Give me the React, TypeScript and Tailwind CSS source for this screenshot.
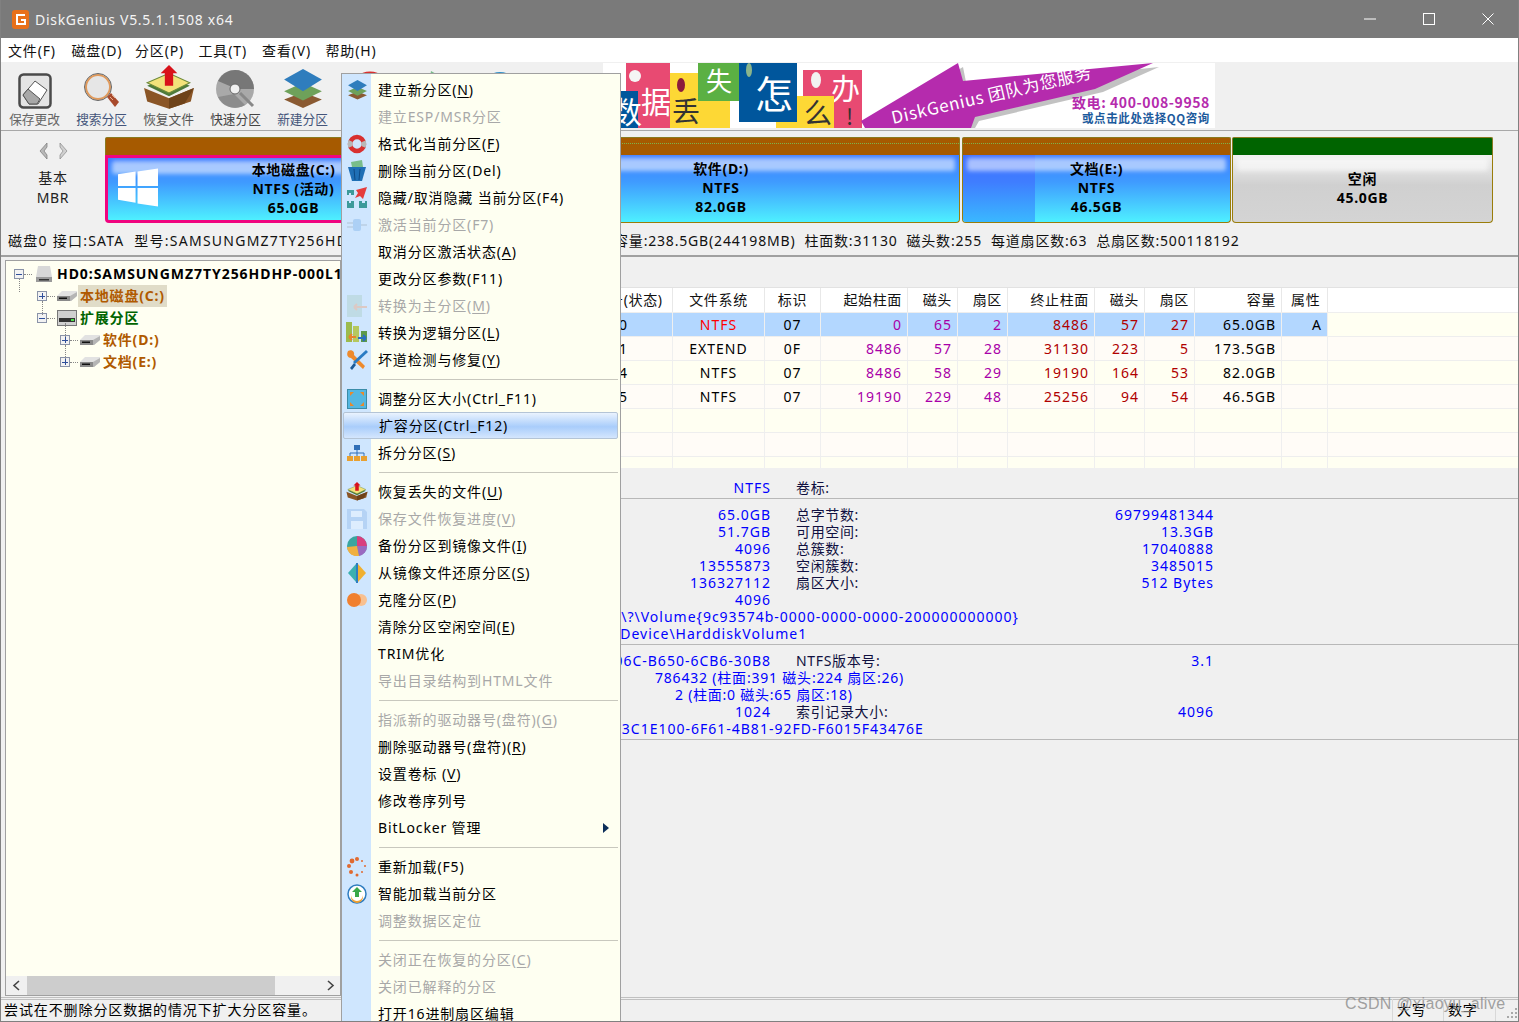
import type { ReactNode } from 'react';

const font = "[font-family:'Noto_Sans','Noto_Sans_CJK_SC',sans-serif]";

function Layers({ size }: { size: number }) {
  return (
    <svg width={size} height={size} viewBox="0 0 40 40">
      <path d="M20 24 38 31 20 39 2 31Z" fill="#8a5a32" />
      <path d="M20 15 38 23 20 32 2 23Z" fill="#6ea15a" />
      <path d="M20 2 38 12 20 23 2 12Z" fill="#2f7dbd" />
    </svg>
  );
}

function SaveIcon() {
  return (
    <svg width="34" height="36" viewBox="0 0 34 36">
      <rect x="1.5" y="1.5" width="31" height="33" rx="4" fill="#e4e4e4" stroke="#4a4a4a" strokeWidth="2.5" />
      <path d="M5 22 17 8 29 17 20 31H11Z" fill="#fff" stroke="#555" />
      <path d="M5 22 10 16 22 26 19 31H11Z" fill="#a8a8a8" stroke="#555" />
    </svg>
  );
}

function SearchIcon() {
  return (
    <svg width="36" height="36" viewBox="0 0 36 36">
      <circle cx="14" cy="14" r="12" fill="#e6e6e6" stroke="#e09a5c" strokeWidth="2" />
      <circle cx="14" cy="14" r="13.5" fill="none" stroke="#666" />
      <path d="M23 24 27 20 35 29 31 34Z" fill="#a84a2c" />
      <path d="M26 24 29 27M28 22 31 25" stroke="#e8b090" />
    </svg>
  );
}

function RecoverIcon({ size = 52 }: { size?: number }) {
  return (
    <svg width={size} height={(size * 42) / 50} viewBox="0 0 50 42">
      <path d="M1 22 25 32 49 22 46 35 25 42 4 35Z" fill="#8a5526" />
      <path d="M25 32 49 22 40 37 25 42Z" fill="#6e4219" />
      <path d="M4 20 25 11 45 20 25 30Z" fill="#4d7a3a" />
      <path d="M4 17 25 8 45 17 25 27Z" fill="#f3e27a" stroke="#6c8a3a" />
      <path d="M21 20V8H17L25 0 33 8H29V20Z" fill="#d8121a" />
    </svg>
  );
}

function DiscIcon() {
  return (
    <svg width="42" height="40" viewBox="0 0 42 40">
      <circle cx="20" cy="20" r="19" fill="#a9a9a9" />
      <path d="M20 1A19 19 0 0 1 39 20H24L17 18 3 12A19 19 0 0 1 20 1Z" fill="#777" />
      <path d="M3 28 19 25 30 36A19 19 0 0 1 3 28Z" fill="#8c8c8c" />
      <circle cx="20" cy="20" r="5" fill="#f0f0f0" stroke="#666" />
      <path d="M25 24 38 37" stroke="#888" strokeWidth="3" />
    </svg>
  );
}

function TreeDisk({ kind }: { kind: 'root' | 'part' | 'ext' }) {
  if (kind === 'root') {
    return (
      <svg width="18" height="18" viewBox="0 0 18 18">
        <path d="M3 1H15L17 12H1Z" fill="#d8d8d8" />
        <rect x="1" y="12" width="16" height="5" fill="#9a9a9a" />
        <rect x="4" y="14" width="10" height="1.5" fill="#333" />
      </svg>
    );
  }
  if (kind === 'ext') {
    return (
      <svg width="20" height="16" viewBox="0 0 20 16">
        <rect x="0.5" y="0.5" width="19" height="15" fill="#d0d0d0" stroke="#777" />
        <rect x="2" y="8" width="16" height="4" fill="#333" />
        <rect x="14" y="9" width="3" height="2" fill="#4be04b" />
      </svg>
    );
  }
  return (
    <svg width="20" height="11" viewBox="0 0 20 11">
      <path d="M5 0H20V5L14 10H0V5Z" fill="#e2e2e2" />
      <path d="M0 5H13V10H0Z" fill="#8a8a8a" />
      <path d="M13 5 20 1V5L14 10H13Z" fill="#b5b5b5" />
      <rect x="2" y="6.5" width="8" height="1.5" fill="#111" />
    </svg>
  );
}

function MenuIcon({ name, dim }: { name: string; dim?: boolean }) {
  const cls = dim ? 'opacity-40' : '';
  switch (name) {
    case 'layers':
      return <Layers size={21} />;
    case 'format':
      return (
        <svg width="20" height="20" viewBox="0 0 20 20">
          <circle cx="10" cy="10" r="7" fill="none" stroke="#d83030" strokeWidth="4.5" />
          <circle cx="10" cy="10" r="7" fill="none" stroke="#b8b8b8" strokeWidth="4.5" strokeDasharray="6 16" strokeDashoffset="-19" />
        </svg>
      );
    case 'trash':
      return (
        <svg width="18" height="22" viewBox="0 0 18 22">
          <path d="M3 2 14 0 15 7H4Z" fill="#79bd8a" />
          <path d="M0 7H18L14 21H4Z" fill="#1f6fb5" />
          <path d="M6 9 7 20M12 9 11 20" stroke="#0d4a85" />
        </svg>
      );
    case 'hide':
      return (
        <svg width="22" height="22" viewBox="0 0 22 22">
          <path d="M1 3H8V8H5V6H3V8H1ZM1 14H3V16H5V14H8V21H1ZM13 14H16V16H19V14H21V21H13Z" fill="#3d9a9a" />
          <path d="M21 0 17 12 14 9 9 11 12 6 10 3Z" fill="#e53b3b" />
        </svg>
      );
    case 'plug':
      return (
        <svg width="20" height="14" viewBox="0 0 20 14" className={cls}>
          <rect x="6" y="1" width="8" height="12" rx="2" fill="#7ab0e8" />
          <path d="M0 5H6M0 9H6M14 7H20" stroke="#9ab" strokeWidth="1.5" />
        </svg>
      );
    case 'primary':
      return (
        <svg width="20" height="22" viewBox="0 0 20 22" className={cls}>
          <rect x="0" y="0" width="15" height="22" fill="#a9ccc0" />
          <path d="M7 12H20M7 12 10 9M7 12 10 15" stroke="#f0a070" strokeWidth="2" fill="none" />
        </svg>
      );
    case 'logical':
      return (
        <svg width="22" height="22" viewBox="0 0 22 22">
          <rect x="0" y="0" width="6" height="20" fill="#9cbb4e" />
          <rect x="7" y="4" width="6" height="16" fill="#b5c85e" />
          <rect x="15" y="9" width="6" height="11" fill="#5d9a4a" />
          <path d="M3 15H10M3 15 6 12M3 15 6 18" stroke="#e8842a" strokeWidth="2" fill="none" />
          <path d="M12 16H20M20 16 17 13M20 16 17 19" stroke="#2a6fc0" strokeWidth="2" fill="none" />
        </svg>
      );
    case 'tools':
      return (
        <svg width="22" height="22" viewBox="0 0 22 22">
          <path d="M2 2C6 0 9 3 8 6L19 17 17 20 5 9C2 9 0 6 2 2Z" fill="#ee8a2c" />
          <path d="M20 1 22 3 9 15 7 13Z" fill="#2a7cc4" />
          <path d="M8 14 4 19 6 21 10 16Z" fill="#1b5a96" />
        </svg>
      );
    case 'resize':
      return (
        <svg width="20" height="20" viewBox="0 0 20 20">
          <rect x="0.5" y="0.5" width="19" height="19" fill="#54b7e2" stroke="#3a8ca8" />
          <path d="M3 3 7 3 3 7ZM17 3 17 7 13 3ZM3 17 3 13 7 17ZM17 17 13 17 17 13Z" fill="#e88a2c" />
        </svg>
      );
    case 'split':
      return (
        <svg width="20" height="16" viewBox="0 0 20 16">
          <rect x="7" y="0" width="6" height="5" fill="#2f6fb8" />
          <path d="M10 5V8M3 11V8H17V11M10 8V11" stroke="#2f6fb8" fill="none" />
          <rect x="0" y="11" width="6" height="5" fill="#e8a030" />
          <rect x="7" y="11" width="6" height="5" fill="#e8a030" />
          <rect x="14" y="11" width="6" height="5" fill="#e8a030" />
        </svg>
      );
    case 'recover':
      return <RecoverIcon size={22} />;
    case 'floppy':
      return (
        <svg width="20" height="20" viewBox="0 0 20 20" className={cls}>
          <path d="M0 0H17L20 3V20H0Z" fill="#90b8e8" />
          <rect x="4" y="2" width="11" height="6" fill="#f4f8ff" />
          <rect x="4" y="12" width="12" height="8" fill="#f4f8ff" />
        </svg>
      );
    case 'pie':
      return (
        <svg width="20" height="20" viewBox="0 0 20 20">
          <circle cx="10" cy="10" r="10" fill="#3aa5a0" />
          <path d="M10 10 10 0A10 10 0 0 1 20 10Z" fill="#d83f7e" />
          <path d="M10 10H20A10 10 0 0 1 12 20Z" fill="#9a6ac0" />
          <path d="M10 10 12 20A10 10 0 0 1 0 11Z" fill="#f0b040" />
        </svg>
      );
    case 'mirror':
      return (
        <svg width="18" height="20" viewBox="0 0 18 20">
          <path d="M8 1V19L0 10Z" fill="#3ab0b0" />
          <path d="M10 1V19L18 10Z" fill="#f0b030" />
          <rect x="8" y="0" width="2" height="20" fill="#2f7dc0" />
        </svg>
      );
    case 'clone':
      return (
        <svg width="20" height="14" viewBox="0 0 20 14">
          <circle cx="14" cy="7" r="6" fill="#f8c090" />
          <circle cx="7" cy="7" r="7" fill="#f08030" />
        </svg>
      );
    case 'reload':
      return (
        <svg width="20" height="20" viewBox="0 0 20 20">
          {[
            [10, 2, 2],
            [15, 4, 1],
            [18, 9, 1],
            [15, 15, 1],
            [10, 18, 1.5],
            [4, 15, 2],
            [2, 9, 2],
            [5, 4, 2.4],
          ].map(([x, y, r]) => (
            <circle key={`${x}-${y}`} cx={x} cy={y} r={r} fill="#e06a30" />
          ))}
        </svg>
      );
    case 'load':
      return (
        <svg width="20" height="20" viewBox="0 0 20 20">
          <circle cx="10" cy="10" r="9" fill="#fff" stroke="#2f7dc0" strokeWidth="1.5" />
          <path d="M4 11A6 6 0 0 0 16 11V13A6 6 0 0 1 4 13Z" fill="#f0a030" />
          <path d="M10 3 15 8H12V13H8V8H5Z" fill="#3aa84a" />
        </svg>
      );
    default:
      return null;
  }
}

function Label({ text }: { text: string }) {
  const i = text.indexOf('&');
  if (i < 0) return <>{text}</>;
  return (
    <>
      {text.slice(0, i)}
      <span className="underline underline-offset-2">{text[i + 1]}</span>
      {text.slice(i + 2)}
    </>
  );
}

type Entry = { t?: string; icon?: string; off?: boolean; on?: boolean; sub?: boolean };

const menu: Entry[] = [
  { t: '建立新分区(&N)', icon: 'layers' },
  { t: '建立ESP/MSR分区', off: true },
  { t: '格式化当前分区(&F)', icon: 'format' },
  { t: '删除当前分区(Del)', icon: 'trash' },
  { t: '隐藏/取消隐藏 当前分区(F4)', icon: 'hide' },
  { t: '激活当前分区(F7)', icon: 'plug', off: true },
  { t: '取消分区激活状态(&A)' },
  { t: '更改分区参数(F11)' },
  { t: '转换为主分区(&M)', icon: 'primary', off: true },
  { t: '转换为逻辑分区(&L)', icon: 'logical' },
  { t: '坏道检测与修复(&Y)', icon: 'tools' },
  {},
  { t: '调整分区大小(Ctrl_F11)', icon: 'resize' },
  { t: '扩容分区(Ctrl_F12)', on: true },
  { t: '拆分分区(&S)', icon: 'split' },
  {},
  { t: '恢复丢失的文件(&U)', icon: 'recover' },
  { t: '保存文件恢复进度(&V)', icon: 'floppy', off: true },
  { t: '备份分区到镜像文件(&I)', icon: 'pie' },
  { t: '从镜像文件还原分区(&S)', icon: 'mirror' },
  { t: '克隆分区(&P)', icon: 'clone' },
  { t: '清除分区空闲空间(&E)' },
  { t: 'TRIM优化' },
  { t: '导出目录结构到HTML文件', off: true },
  {},
  { t: '指派新的驱动器号(盘符)(&G)', off: true },
  { t: '删除驱动器号(盘符)(&R)' },
  { t: '设置卷标 (&V)' },
  { t: '修改卷序列号' },
  { t: 'BitLocker 管理', sub: true },
  {},
  { t: '重新加载(F5)', icon: 'reload' },
  { t: '智能加载当前分区', icon: 'load' },
  { t: '调整数据区定位', off: true },
  {},
  { t: '关闭正在恢复的分区(&C)', off: true },
  { t: '关闭已解释的分区', off: true },
  { t: '打开16进制扇区编辑' },
];

function ContextMenu() {
  return (
    <div className="absolute left-[340px] top-[73px] z-10 w-[280px] border border-[#a0a0a0] bg-[#fefff1] pt-[2px] pl-[1px] pb-[10px]">
      <div className="absolute left-0 top-0 bottom-0 w-[29px] bg-[#cfe6fe]" />
      {menu.map((m, i) =>
        m.t ? (
          <div
            key={i}
            className={`relative flex h-[27px] w-[275px] items-center text-[14px] ${
              m.off ? 'text-[#a8a8a8]' : 'text-black'
            } ${
              m.on
                ? 'rounded-[2px] border border-[#b4c4d6] bg-[linear-gradient(#eaf3fe,#a9cdfb_55%,#d4e6fd)]'
                : ''
            }`}
          >
            <span className="flex w-[35px] shrink-0 items-center justify-center pr-[7px]">
              {m.icon && <MenuIcon name={m.icon} dim={m.off} />}
            </span>
            <span className="whitespace-nowrap tracking-[0.85px]">
              <Label text={m.t} />
            </span>
            {m.sub && (
              <svg className="absolute right-[9px]" width="6" height="10" viewBox="0 0 6 10">
                <path d="M0 0 6 5 0 10Z" fill="#0d2f5a" />
              </svg>
            )}
          </div>
        ) : (
          <div key={i} className="relative flex h-[12px] items-center pl-[36px] pr-[2px]">
            <div className="h-px w-full bg-[#c8c8be]" />
          </div>
        ),
      )}
    </div>
  );
}

function Banner() {
  const face = "'Noto Sans CJK SC', sans-serif";
  return (
    <svg width="612" height="65" viewBox="0 0 612 65" className="shrink-0 bg-white">
      <rect x="23" y="0" width="44" height="65" fill="#e84a72" />
      <circle cx="32" cy="13" r="6" fill="#f5f5f5" />
      <rect x="0" y="28" width="35" height="37" fill="#00569c" />
      <text x="9" y="60" fontSize="30" fill="#fff" fontFamily={face}>数</text>
      <text x="38" y="50" fontSize="30" fill="#fff" fontFamily={face}>据</text>
      <rect x="67" y="10" width="60" height="55" fill="#fdd835" />
      <ellipse cx="78" cy="22" rx="4" ry="7" fill="#8c1c3c" />
      <text x="69" y="59" fontSize="28" fill="#333" fontFamily={face}>丢</text>
      <rect x="95" y="0" width="41" height="38" fill="#5bb043" />
      <text x="103" y="28" fontSize="26" fill="#fff" fontFamily={face}>失</text>
      <rect x="200" y="7" width="59" height="58" fill="#e84a72" />
      <ellipse cx="213" cy="17" rx="5" ry="8" fill="#f2f2f2" />
      <text x="228" y="37" fontSize="29" fill="#fff" fontFamily={face}>办</text>
      <rect x="173" y="33" width="58" height="32" fill="#fdd835" />
      <text x="201" y="61" fontSize="28" fill="#333" fontFamily={face}>么</text>
      <text x="243" y="62" fontSize="22" fill="#333" fontFamily={face}>!</text>
      <rect x="136" y="0" width="58" height="59" fill="#00569c" />
      <ellipse cx="146" cy="7" rx="3" ry="7" fill="#8bb58b" />
      <text x="152" y="45" fontSize="38" fill="#fff" fontFamily={face}>怎</text>
      <path d="M262 62 360 4 364 24 556 4 500 29 376 58 372 65H280Z" fill="#999" opacity="0.6" />
      <path d="M258 58 355 0 360 18 550 0 492 26 372 54 368 65 262 65Z" fill="#b52bad" />
      <text
        x="0"
        y="0"
        fontSize="17"
        fill="#fff"
        fontFamily={face}
        transform="translate(290 61) rotate(-13)"
      >
        DiskGenius 团队为您服务
      </text>
      <text x="469" y="45" fontSize="14" fontWeight="700" fill="#b52bad" fontFamily={face} textLength="138">
        致电: 400-008-9958
      </text>
      <text x="479" y="60" fontSize="12" fontWeight="700" fill="#1c5a9c" fontFamily={face} textLength="128" lengthAdjust="spacingAndGlyphs">
        或点击此处选择QQ咨询
      </text>
    </svg>
  );
}

function Gloss({ left = 4 }: { left?: number }) {
  return (
    <div
      className="absolute right-[4px] top-[3px] h-[13px] rounded-[3px] bg-white opacity-55 blur-[2px]"
      style={{ left }}
    />
  );
}

function Partition({
  w,
  band,
  lines,
  body,
  active,
  dots,
  used,
  children,
}: {
  w: string;
  band: string;
  lines: string[];
  body: string;
  active?: boolean;
  dots?: boolean;
  used?: string;
  children?: ReactNode;
}) {
  return (
    <div className={`flex h-[86px] shrink-0 flex-col ${w}`}>
      <div className={`relative h-[18px] shrink-0 rounded-t-[2px] border border-b-0 border-[#8a7a20] ${band}`}>
        {dots && <div className="absolute left-0 right-0 top-[5px] border-t border-dotted border-[#7cb44a]" />}
      </div>
      <div
        className={`relative flex flex-1 flex-col items-center justify-center overflow-hidden rounded-b-[4px] pb-[2px] ${body} ${
          active ? 'border-[3px] border-[#f0047f]' : 'border border-t-0 border-[#9a7d0a]'
        }`}
      >
        {used && <div className={`absolute bottom-0 left-0 top-0 ${used}`} />}
        <Gloss />
        {children}
        {lines.map((l) => (
          <div key={l} className="relative text-[14px] font-bold leading-[19px] text-black">
            {l}
          </div>
        ))}
      </div>
    </div>
  );
}

const blueBody = 'bg-[linear-gradient(#3f7dff,#3f9bff_40%,#4ef0ff)]';

function ExpandBox({ open }: { open?: boolean }) {
  return (
    <span className="relative flex h-[10px] w-[10px] shrink-0 items-center justify-center border border-[#8a93a8] bg-[#f2f2f2]">
      <span className="h-px w-[6px] bg-[#2f4f9a]" />
      {!open && <span className="absolute h-[6px] w-px bg-[#2f4f9a]" />}
    </span>
  );
}

function TreeRow({
  indent,
  open,
  kind,
  color,
  selected,
  children,
}: {
  indent: string;
  open?: boolean;
  kind: 'root' | 'part' | 'ext';
  color: string;
  selected?: boolean;
  children: ReactNode;
}) {
  return (
    <div className={`flex h-[22px] items-center ${indent}`}>
      <ExpandBox open={open} />
      <span className="mr-[1px] w-[8px] shrink-0 border-t border-dotted border-[#888]" />
      <span className="flex w-[22px] shrink-0 items-center justify-center">
        <TreeDisk kind={kind} />
      </span>
      <span
        className={`shrink-0 whitespace-nowrap px-[2px] text-[14px] font-bold leading-[22px] ${
          kind === 'root' ? 'tracking-[0.95px]' : 'tracking-[0.8px]'
        } ${color} ${selected ? 'bg-[#e0dcc8]' : ''}`}
      >
        {children}
      </span>
    </div>
  );
}

const head = ['卷标', '序号(状态)', '文件系统', '标识', '起始柱面', '磁头', '扇区', '终止柱面', '磁头', '扇区', '容量', '属性'];

const rows = [
  ['本地磁盘(C:)', '0', 'NTFS', '07', '0', '65', '2', '8486', '57', '27', '65.0GB', 'A'],
  ['扩展分区', '1', 'EXTEND', '0F', '8486', '57', '28', '31130', '223', '5', '173.5GB', ''],
  ['软件(D:)', '4', 'NTFS', '07', '8486', '58', '29', '19190', '164', '53', '82.0GB', ''],
  ['文档(E:)', '5', 'NTFS', '07', '19190', '229', '48', '25256', '94', '54', '46.5GB', ''],
  ['', '', '', '', '', '', '', '', '', '', '', ''],
  ['', '', '', '', '', '', '', '', '', '', '', ''],
];

const grid =
  'grid h-[24px] grid-cols-[240px_88px_92px_56px_87px_50px_50px_87px_50px_50px_87px_46px_1fr] text-[14px] leading-[23px]';

function cellClass(c: number, selected: boolean) {
  const align = c === 1 ? 'text-center pr-[10px]' : c <= 3 ? 'text-center' : 'text-right pr-[5px]';
  let color = 'text-black';
  if (c >= 4 && c <= 6) color = 'text-[#a800a8]';
  if (c >= 7 && c <= 9) color = 'text-[#b00000]';
  if (c === 2 && selected) color = 'text-[#ff0000]';
  return `${align} ${color}`;
}

function DetailRow({ v, label, r }: { v: string; label?: string; r?: string }) {
  return (
    <div className="flex h-[17px] w-[869px] text-[14px] leading-[17px] text-[#0000ff]">
      <div className="w-[426px] shrink-0 whitespace-nowrap text-right tracking-[1px]">{v}</div>
      <div className="ml-[25px] flex-1 whitespace-nowrap text-[#101040]">{label}</div>
      <div className="whitespace-nowrap tracking-[1px]">{r}</div>
    </div>
  );
}

function FreeRow({ pad, children }: { pad: string; children: ReactNode }) {
  return (
    <div className={`h-[17px] whitespace-nowrap text-[14px] leading-[17px] text-[#0000ff] ${pad}`}>
      {children}
    </div>
  );
}

const tools = [
  { label: '保存更改', icon: <SaveIcon />, color: 'text-[#666]' },
  { label: '搜索分区', icon: <SearchIcon />, color: 'text-[#44557a]' },
  { label: '恢复文件', icon: <RecoverIcon />, color: 'text-[#555]' },
  { label: '快速分区', icon: <DiscIcon />, color: 'text-[#444]' },
  { label: '新建分区', icon: <Layers size={42} />, color: 'text-[#44557a]' },
  {
    label: '格式化',
    icon: (
      <svg width="36" height="38" viewBox="0 0 36 38">
        <circle cx="18" cy="19" r="15" fill="none" stroke="#d83030" strokeWidth="7" />
      </svg>
    ),
    color: 'text-[#444]',
  },
  {
    label: '删除分区',
    icon: (
      <svg width="36" height="38" viewBox="0 0 36 38">
        <path d="M12 0 26 8 30 38H6Z" fill="#79bd8a" />
      </svg>
    ),
    color: 'text-[#444]',
  },
  {
    label: '备份分区',
    icon: (
      <svg width="36" height="38" viewBox="0 0 36 38">
        <circle cx="14" cy="19" r="18" fill="#2f8fc8" />
      </svg>
    ),
    color: 'text-[#444]',
  },
];

export default function App() {
  return (
    <div className={`relative flex h-[1022px] w-[1519px] flex-col overflow-hidden border-x border-b border-[#808080] bg-[#f0f0f0] tracking-[0.65px] ${font}`}>
      <div className="flex h-[38px] shrink-0 items-center bg-[#7a7a7a] text-[#f4f4f4]">
        <svg className="ml-[11px]" width="17" height="19" viewBox="0 0 17 19">
          <rect width="17" height="19" rx="3" fill="#e8701a" />
          <path d="M13 5H5V14H13V10H9" fill="none" stroke="#fff" strokeWidth="2" />
        </svg>
        <span className="ml-[6px] text-[14px] tracking-[0.7px]">DiskGenius V5.5.1.1508 x64</span>
        <div className="ml-auto flex items-center">
          <svg className="mr-[47px]" width="12" height="2" viewBox="0 0 12 2"><path d="M0 1H12" stroke="#fff" /></svg>
          <svg className="mr-[47px]" width="12" height="12" viewBox="0 0 12 12"><rect x="0.5" y="0.5" width="11" height="11" fill="none" stroke="#fff" /></svg>
          <svg className="mr-[24px]" width="12" height="12" viewBox="0 0 12 12"><path d="M0.5 0.5 11.5 11.5M11.5 0.5 0.5 11.5" stroke="#fff" /></svg>
        </div>
      </div>

      <div className="flex h-[24px] shrink-0 items-center bg-white pl-[7px] text-[14px] tracking-[0.85px] text-[#111]">
        {['文件(F)', '磁盘(D)', '分区(P)', '工具(T)', '查看(V)', '帮助(H)'].map((m) => (
          <span key={m} className="w-[63.5px] whitespace-nowrap">{m}</span>
        ))}
      </div>

      <div className="flex h-[69px] shrink-0 border-b border-[#a8a8a8] pt-[1px]">
        <div className="flex w-[602px] shrink-0">
          {tools.map((t) => (
            <div key={t.label} className="flex w-[67px] shrink-0 flex-col items-center">
              <div className="flex h-[46px] items-end justify-center">{t.icon}</div>
              <span className={`mt-[2px] whitespace-nowrap text-[12.7px] leading-[16px] tracking-normal ${t.color}`}>{t.label}</span>
            </div>
          ))}
        </div>
        <Banner />
      </div>

      <div className="flex h-[100px] shrink-0 items-start pt-[6px]">
        <div className="flex w-[104px] shrink-0 flex-col items-center pt-[5px] text-[14px] leading-[20px] text-[#222]">
          <svg width="31" height="18" viewBox="0 0 31 18" className="mb-[8px]">
            <path d="M9 1 2 9 9 17V13L6 9 9 5Z" fill="#b8b8b8" stroke="#777" strokeWidth="0.7" />
            <path d="M22 1 29 9 22 17V13L25 9 22 5Z" fill="#d0d0d0" stroke="#888" strokeWidth="0.7" />
          </svg>
          <span>基本</span>
          <span>MBR</span>
        </div>
        <Partition w="w-[377px]" band="bg-[#a65a00]" body={blueBody} active lines={[]}>
          <div className="absolute left-[10px] top-[10px]">
            <svg width="41" height="39" viewBox="0 0 42 39">
              <path d="M0 6 18 3V18H0ZM20 3 41 0V18H20ZM0 20H18V35L0 32ZM20 20H41V39L20 36Z" fill="#fff" />
            </svg>
          </div>
          <div className="relative text-center text-[14px] font-bold leading-[19px] text-black">
            <div>本地磁盘(C:)</div>
            <div>NTFS (活动)</div>
            <div>65.0GB</div>
          </div>
        </Partition>
        <Partition w="w-[478px]" band="bg-[#a65a00]" body={blueBody} dots lines={['软件(D:)', 'NTFS', '82.0GB']} />
        <div className="w-[2px] shrink-0" />
        <Partition w="w-[269px]" band="bg-[#a65a00]" body={blueBody} dots used="w-[72px] bg-[linear-gradient(#3f6fff,#3f7dff_40%,#3ab8ff)]" lines={['文档(E:)', 'NTFS', '46.5GB']} />
        <div className="w-[1px] shrink-0" />
        <Partition w="w-[261px]" band="bg-[#006400]" body="bg-[linear-gradient(#f0f0f0,#d0d0d0_45%,#d4d4d4)]" lines={['空闲', '45.0GB']} />
      </div>

      <div className="flex h-[26px] shrink-0 border-b-2 border-[#a0a0a0] pl-[7px] text-[14px] leading-[20px] tracking-[0.82px] text-[#111]">
        <div className="w-[606px] shrink-0 overflow-hidden whitespace-nowrap tracking-[1.25px]">磁盘0 接口:SATA&nbsp; 型号:SAMSUNGMZ7TY256HDHP-000L1&nbsp; S/N:S3VZNX0K</div>
        <div className="whitespace-nowrap">容量:238.5GB(244198MB)&nbsp; 柱面数:31130&nbsp; 磁头数:255&nbsp; 每道扇区数:63&nbsp; 总扇区数:500118192</div>
      </div>

      <div className="flex min-h-0 flex-1">
        <div className="ml-[4px] mt-[3px] mb-[1px] flex w-[336px] shrink-0 flex-col border border-[#a0a0a0] bg-[#fffff2]">
          <div className="relative flex-1 overflow-hidden pl-[8px] pt-[2px]">
            <TreeRow indent="pl-0" open kind="root" color="text-black">
              HD0:SAMSUNGMZ7TY256HDHP-000L1
            </TreeRow>
            <TreeRow indent="pl-[23px]" kind="part" color="text-[#b05a00]" selected>
              本地磁盘(C:)
            </TreeRow>
            <TreeRow indent="pl-[23px]" open kind="ext" color="text-[#006400]">
              扩展分区
            </TreeRow>
            <TreeRow indent="pl-[46px]" kind="part" color="text-[#b05a00]">
              软件(D:)
            </TreeRow>
            <TreeRow indent="pl-[46px]" kind="part" color="text-[#b05a00]">
              文档(E:)
            </TreeRow>
            <span className="absolute left-[13px] top-[18px] h-[13px] border-l border-dotted border-[#888]" />
            <span className="absolute left-[36px] top-[40px] h-[14px] border-l border-dotted border-[#888]" />
            <span className="absolute left-[59px] top-[62px] h-[14px] border-l border-dotted border-[#888]" />
            <span className="absolute left-[59px] top-[84px] h-[14px] border-l border-dotted border-[#888]" />
          </div>
          <div className="flex h-[19px] shrink-0 items-center bg-[#f0f0f0]">
            <svg className="mx-[5px]" width="11" height="11" viewBox="0 0 11 11"><path d="M8 1 3 5.5 8 10" fill="none" stroke="#444" strokeWidth="1.6" /></svg>
            <div className="h-full w-[248px] bg-[#cdcdcd]" />
            <svg className="ml-auto mr-[4px]" width="11" height="11" viewBox="0 0 11 11"><path d="M3 1 8 5.5 3 10" fill="none" stroke="#444" strokeWidth="1.6" /></svg>
          </div>
        </div>

        <div className="ml-[4px] flex min-w-0 flex-1 flex-col">
          <div className="mt-[30px] h-px bg-[#e2e2e2]" />
          <div className="bg-[#fffff2]">
            <div className={`${grid} bg-white`}>
              {head.map((h, c) => (
                <div
                  key={c}
                  className={`border-r border-[#e8e8e8] ${
                    c === 1 || c === 2 || c === 3 ? 'text-center' : c === 11 ? 'pl-[9px]' : 'pr-[5px] text-right'
                  } whitespace-nowrap text-[#111]`}
                >
                  {h}
                </div>
              ))}
              <div />
            </div>
            {rows.map((r, i) => (
              <div
                key={i}
                className={`${grid} border-t border-[#eeeeee] tracking-[1px] ${i % 2 === 1 ? 'bg-[#fffcf7]' : ''}`}
              >
                {r.map((v, c) => (
                  <div
                    key={c}
                    className={`border-r border-[#efefef] ${cellClass(c, i === 0)} ${i === 0 ? 'bg-[#b3d7ff]' : ''}`}
                  >
                    {v}
                  </div>
                ))}
                <div />
              </div>
            ))}
            <div className="grid h-[12px] grid-cols-[240px_88px_92px_56px_87px_50px_50px_87px_50px_50px_87px_46px_1fr] border-t border-[#eeeeee]">
              {Array.from({ length: 12 }).map((_, i) => (
                <div key={i} className="border-r border-[#efefef]" />
              ))}
            </div>
          </div>

          <div className="mt-[11px] border-b border-[#b8b8b8] pb-[2px]">
            <DetailRow v="NTFS" label="卷标:" />
          </div>
          <div className="mt-[7px] border-b border-[#b8b8b8] pb-[2px]">
            <DetailRow v="65.0GB" label="总字节数:" r="69799481344" />
            <DetailRow v="51.7GB" label="可用空间:" r="13.3GB" />
            <DetailRow v="4096" label="总簇数:" r="17040888" />
            <DetailRow v="13555873" label="空闲簇数:" r="3485015" />
            <DetailRow v="136327112" label="扇区大小:" r="512 Bytes" />
            <DetailRow v="4096" />
            <FreeRow pad="pl-[270px] tracking-[1px]">\\?\Volume{'{'}9c93574b-0000-0000-0000-200000000000{'}'}</FreeRow>
            <FreeRow pad="pl-[269px] tracking-[1px]">\Device\HarddiskVolume1</FreeRow>
          </div>
          <div className="mt-[7px] border-b border-[#b8b8b8] pb-[2px]">
            <DetailRow v="606C-B650-6CB6-30B8" label="NTFS版本号:" r="3.1" />
            <FreeRow pad="pl-[310px] tracking-[0.8px]">786432 (柱面:391 磁头:224 扇区:26)</FreeRow>
            <FreeRow pad="pl-[330px] tracking-[0.75px]">2 (柱面:0 磁头:65 扇区:18)</FreeRow>
            <DetailRow v="1024" label="索引记录大小:" r="4096" />
            <FreeRow pad="pl-[268px] tracking-[1px]">E3C1E100-6F61-4B81-92FD-F6015F43476E</FreeRow>
          </div>
        </div>
      </div>

      <div className="flex h-[24px] shrink-0 items-end border-t-3 border-double border-[#c0c0c0] text-[14px] leading-[22px] text-black">
        <span className="flex-1 whitespace-nowrap pl-[3px] tracking-[0.9px]">尝试在不删除分区数据的情况下扩大分区容量。</span>
        <span className="w-[51px] border-l border-[#d8d8d8] pl-[4px]">大写</span>
        <span className="w-[52px] border-l border-[#d8d8d8] pl-[4px]">数字</span>
        <span className="w-[23px] border-l border-[#d8d8d8]">
          <svg className="ml-[10px] mb-[2px]" width="12" height="12" viewBox="0 0 12 12" fill="#a8a8a8">
            <rect x="9" y="1" width="2" height="2" />
            <rect x="5" y="5" width="2" height="2" />
            <rect x="9" y="5" width="2" height="2" />
            <rect x="1" y="9" width="2" height="2" />
            <rect x="5" y="9" width="2" height="2" />
            <rect x="9" y="9" width="2" height="2" />
          </svg>
        </span>
      </div>

      <ContextMenu />
      <div className="absolute left-[1344px] top-[994px] z-20 whitespace-nowrap text-[16px] leading-[20px] tracking-[0.35px] text-[#8a8a8a]/80 [font-family:'Liberation_Sans',sans-serif]">
        CSDN @xiaoyu_alive
      </div>
    </div>
  );
}
